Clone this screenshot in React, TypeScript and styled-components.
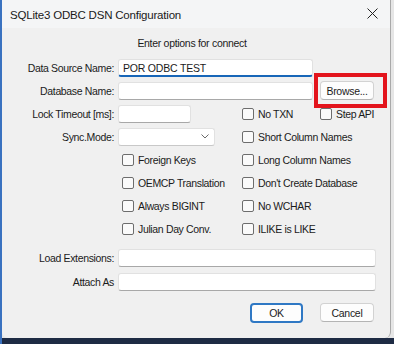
import { Fragment } from 'react';
import styled, { createGlobalStyle } from 'styled-components';

const GlobalStyle = createGlobalStyle`
  html, body {
    margin: 0;
    padding: 0;
  }
  body {
    font-family: "Liberation Sans", Arial, sans-serif;
    color: #1b1b1b;
  }
`

const Desktop = styled.div`
  width: 394px;
  height: 344px;
  display: flex;
  padding-left: 2px;
  box-sizing: border-box;
  background: linear-gradient(to bottom, #e6e6e6 0, #e6e6e6 338px, #1e2b44 338px);
  box-shadow: inset 2px 0 0 #3a72c0;
  overflow: hidden;
`

const Window = styled.div`
  width: 389px;
  height: 338px;
  display: flex;
  flex-direction: column;
  background: #f0f0f0;
  border-right: 1px solid #a9a9a9;
  border-bottom-left-radius: 6px;
  border-bottom-right-radius: 6px;
  box-sizing: border-box;
`

const TitleBar = styled.div`
  height: 28px;
  display: flex;
  align-items: center;
  justify-content: space-between;
  padding: 2px 10px 0 8px;
  box-sizing: border-box;
  background: #f4f5f6;
`

const Title = styled.span`
  font-size: 11.5px;
  letter-spacing: -0.2px;
  color: #1a1a1a;
`

const CloseIcon = styled.svg`
  width: 11px;
  height: 11px;
  margin: -3px 2px 0 0;
`

const Body = styled.div`
  display: flex;
  flex-direction: column;
  padding: 8px 14px 0 0;
`

const Heading = styled.div`
  font-size: 10.5px;
  letter-spacing: -0.3px;
  line-height: 14px;
  text-align: center;
  padding-left: 6px;
`

const Form = styled.div<{ $rowHeight: number; $top: number }>`
  display: grid;
  grid-template-columns: 112px 1fr;
  grid-auto-rows: ${p => p.$rowHeight}px;
  column-gap: 4px;
  margin-top: ${p => p.$top}px;
`

const Label = styled.div`
  font-size: 10.5px;
  letter-spacing: -0.35px;
  text-align: right;
  align-self: center;
  white-space: nowrap;
`

const Field = styled.div`
  display: flex;
  align-items: center;
`

const Slot = styled.div<{ $width?: number; $pad?: number }>`
  display: flex;
  align-items: center;
  width: ${p => (p.$width ? `${p.$width}px` : 'auto')};
  padding-left: ${p => p.$pad || 0}px;
  box-sizing: border-box;
  flex-shrink: 0;
`

const TextBox = styled.div<{ $width?: number; $focused?: boolean }>`
  width: ${p => (p.$width ? `${p.$width}px` : '100%')};
  height: 18px;
  box-sizing: border-box;
  background: #ffffff;
  border: 1px solid #e1e1e1;
  border-bottom: ${p => (p.$focused ? '2px solid #1766b8' : '1px solid #a8a8a8')};
  border-radius: 3px;
  font-size: 10.5px;
  letter-spacing: -0.2px;
  line-height: 16px;
  padding-left: 4px;
`

const Select = styled(TextBox)`
  display: flex;
  align-items: center;
  justify-content: flex-end;
  padding-right: 5px;
  border-bottom: 1px solid #c8c8c8;
`

const Chevron = styled.svg`
  width: 8px;
  height: 5px;
`

const Check = styled.label`
  display: flex;
  align-items: center;
  gap: 4px;
  font-size: 10.5px;
  letter-spacing: -0.35px;
  white-space: nowrap;
`

const Box = styled.span`
  width: 12px;
  height: 12px;
  box-sizing: border-box;
  border: 1px solid #6d6d6d;
  border-radius: 2px;
  background: #fafafa;
`

const Button = styled.div<{ $default?: boolean }>`
  width: ${p => (p.$default ? 53 : 54)}px;
  height: ${p => (p.$default ? 20 : 19)}px;
  box-sizing: border-box;
  display: flex;
  align-items: center;
  justify-content: center;
  background: #fdfdfd;
  border: ${p => (p.$default ? '2px solid #2f78c4' : '1px solid #d2d2d2')};
  border-bottom-color: ${p => (p.$default ? '#2f78c4' : '#b4b4b4')};
  border-radius: 4px;
  font-size: 10.5px;
  letter-spacing: -0.3px;
`

const Highlight = styled.div`
  position: relative;
  margin-left: 7px;
`

const RedFrame = styled.div`
  position: absolute;
  left: -6px;
  top: -8px;
  width: 73px;
  height: 35px;
  box-sizing: border-box;
  border: 4px solid #e3141c;
`

const Buttons = styled.div`
  display: flex;
  justify-content: flex-end;
  gap: 17px;
  margin-top: 9px;
  padding-right: 2px;
`

const CheckItem = ({ text }: { text: string }) => (
  <Check>
    <Box />
    {text}
  </Check>
)

const checkRows: [string, string][] = [
  ['Foreign Keys', 'Long Column Names'],
  ['OEMCP Translation', "Don't Create Database"],
  ['Always BIGINT', 'No WCHAR'],
  ['Julian Day Conv.', 'ILIKE is LIKE'],
]

const App = () => {
  return (
    <>
      <GlobalStyle />
      <Desktop>
        <Window>
          <TitleBar>
            <Title>SQLite3 ODBC DSN Configuration</Title>
            <CloseIcon viewBox="0 0 11 11">
              <path d="M0.5 0.5 L10.5 10.5 M10.5 0.5 L0.5 10.5" stroke="#222" strokeWidth="1" />
            </CloseIcon>
          </TitleBar>
          <Body>
            <Heading>Enter options for connect</Heading>
            <Form $rowHeight={23} $top={6}>
              <Label>Data Source Name:</Label>
              <Field>
                <TextBox $width={195} $focused>POR ODBC TEST</TextBox>
              </Field>

              <Label>Database Name:</Label>
              <Field>
                <TextBox $width={195} />
                <Highlight>
                  <Button>Browse...</Button>
                  <RedFrame />
                </Highlight>
              </Field>

              <Label>Lock Timeout [ms]:</Label>
              <Field>
                <Slot $width={124}>
                  <TextBox $width={73} />
                </Slot>
                <Slot $width={78}>
                  <CheckItem text="No TXN" />
                </Slot>
                <Slot>
                  <CheckItem text="Step API" />
                </Slot>
              </Field>

              <Label>Sync.Mode:</Label>
              <Field>
                <Slot $width={124}>
                  <Select $width={97}>
                    <Chevron viewBox="0 0 8 5">
                      <polyline points="0.5,0.5 4,4 7.5,0.5" fill="none" stroke="#6a6a6a" strokeWidth="1" />
                    </Chevron>
                  </Select>
                </Slot>
                <Slot>
                  <CheckItem text="Short Column Names" />
                </Slot>
              </Field>

              {checkRows.map(([left, right]) => (
                <Fragment key={left}>
                  <Label />
                  <Field>
                    <Slot $width={124} $pad={4}>
                      <CheckItem text={left} />
                    </Slot>
                    <Slot>
                      <CheckItem text={right} />
                    </Slot>
                  </Field>
                </Fragment>
              ))}
            </Form>

            <Form $rowHeight={24} $top={6}>
              <Label>Load Extensions:</Label>
              <Field>
                <TextBox />
              </Field>
              <Label>Attach As</Label>
              <Field>
                <TextBox />
              </Field>
            </Form>

            <Buttons>
              <Button $default>OK</Button>
              <Button>Cancel</Button>
            </Buttons>
          </Body>
        </Window>
      </Desktop>
    </>
  )
}

export default App
